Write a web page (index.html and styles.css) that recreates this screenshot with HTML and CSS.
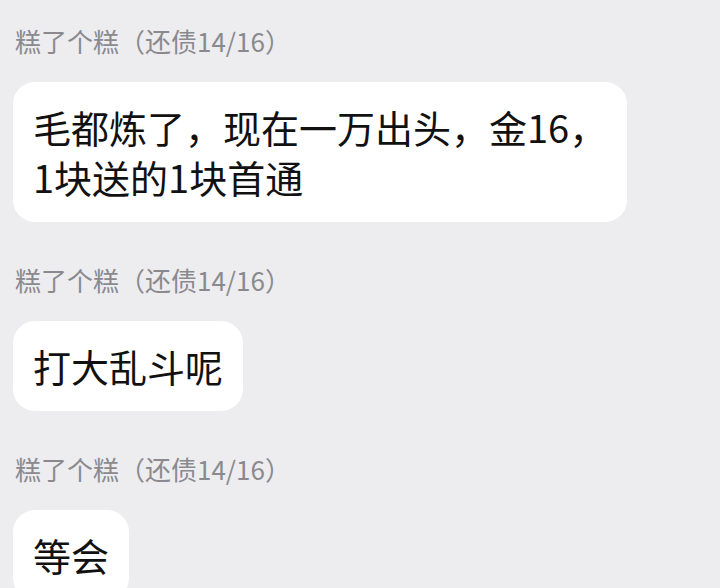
FILE: index.html
```html
<!DOCTYPE html>
<html lang="zh-CN">
<head>
    <meta charset="UTF-8">
    <meta name="viewport" content="width=device-width, initial-scale=1.0">
    <title>聊天</title>
    <link rel="stylesheet" href="styles.css">
</head>
<body>
    <div class="chat">
        <div class="msg">
            <div class="name">糕了个糕（还债14/16）</div>
            <div class="bubble">毛都炼了，现在一万出头，金16，<br>1块送的1块首通</div>
        </div>
        <div class="msg">
            <div class="name">糕了个糕（还债14/16）</div>
            <div class="bubble">打大乱斗呢</div>
        </div>
        <div class="msg">
            <div class="name">糕了个糕（还债14/16）</div>
            <div class="bubble">等会</div>
        </div>
    </div>
</body>
</html>
```

FILE: styles.css
```css
body {
    margin: 0;
    background-color: #ededf0;
    font-family: "Noto Sans CJK SC", "Noto Sans", sans-serif;
    overflow: hidden;
}
.chat {
    padding: 24px 0 0 13px;
}
.msg {
    margin-bottom: 41px;
}
.name {
    font-size: 26px;
    line-height: 34px;
    color: #8a8a8e;
    padding-left: 2px;
    margin-bottom: 24px;
}
.bubble {
    display: inline-block;
    padding: 20px;
    background: white;
    border-radius: 22px;
    font-size: 38px;
    line-height: 50px;
    color: #111;
}
```
